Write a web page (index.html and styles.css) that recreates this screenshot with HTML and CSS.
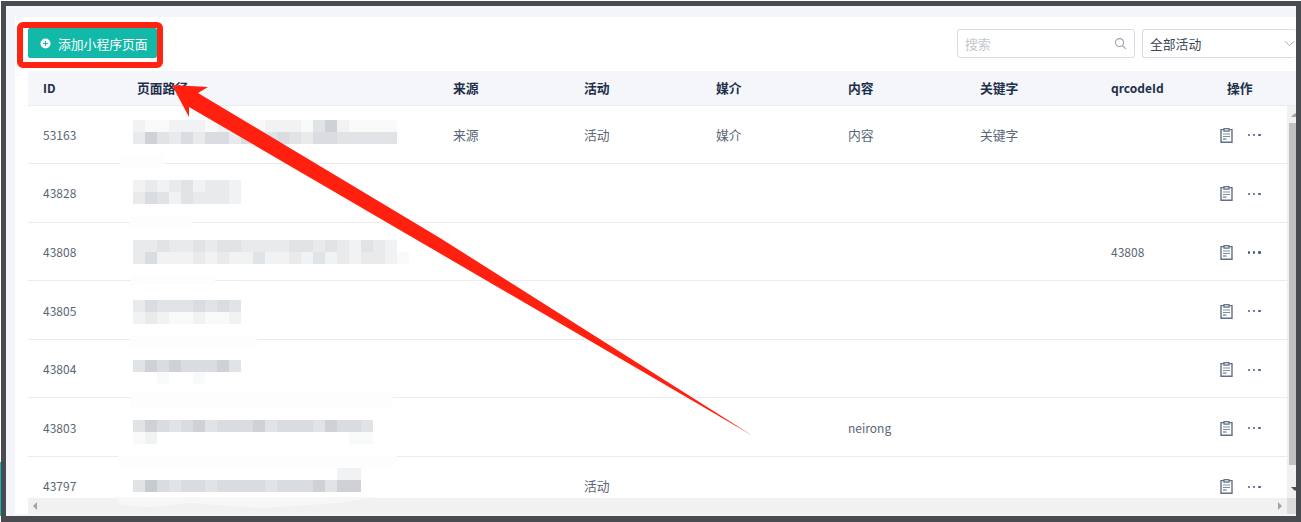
FILE: index.html
```html
<!DOCTYPE html>
<html lang="zh-CN">
<head>
    <meta charset="UTF-8">
    <title>小程序页面</title>
    <link rel="stylesheet" href="styles.css">
</head>
<body>
    <div class="edge"></div>
    <div class="frame">
        <div class="panel">
            <div class="toolbar">
                <button type="button" class="add-button">
                    <svg class="add-icon" viewBox="0 0 12 12"><circle cx="6" cy="6" r="5.5" fill="#fff"/><path d="M3.2 6h5.6M6 3.2v5.6" stroke="#14b8a6" stroke-width="1.3"/></svg>
                    添加小程序页面
                </button>
                <div class="filters">
                    <div class="search">
                        <span>搜索</span>
                        <svg class="search-icon" viewBox="0 0 14 14"><circle cx="6" cy="6" r="4.3" fill="none" stroke="#9aa3ad" stroke-width="1.2"/><path d="M9.2 9.2l3.6 3.6" stroke="#9aa3ad" stroke-width="1.2"/></svg>
                    </div>
                    <div class="select">
                        <span>全部活动</span>
                        <svg class="chevron" viewBox="0 0 12 8"><path d="M1 1.5l5 5 5-5" fill="none" stroke="#9aa3ad" stroke-width="1"/></svg>
                    </div>
                </div>
            </div>

            <div class="table">
                <div class="row head">
                    <div class="latin">ID</div><div>页面路径</div><div>来源</div><div>活动</div><div>媒介</div><div>内容</div><div>关键字</div><div class="latin">qrcodeId</div><div>操作</div>
                </div>
                <div class="body">
                    <div class="rows">
                        <div class="row">
                            <div class="latin">53163</div><div></div>
                            <div>来源</div><div>活动</div><div>媒介</div><div>内容</div><div>关键字</div><div></div>
                            <div class="actions"><svg class="clip"><use href="#clip"/></svg><span class="more"><i></i><i></i><i></i></span></div>
                        </div>
                        <div class="row">
                            <div class="latin">43828</div><div></div>
                            <div></div><div></div><div></div><div></div><div></div><div></div>
                            <div class="actions"><svg class="clip"><use href="#clip"/></svg><span class="more"><i></i><i></i><i></i></span></div>
                        </div>
                        <div class="row">
                            <div class="latin">43808</div><div></div>
                            <div></div><div></div><div></div><div></div><div></div><div class="latin">43808</div>
                            <div class="actions"><svg class="clip"><use href="#clip"/></svg><span class="more"><i></i><i></i><i></i></span></div>
                        </div>
                        <div class="row">
                            <div class="latin">43805</div><div></div>
                            <div></div><div></div><div></div><div></div><div></div><div></div>
                            <div class="actions"><svg class="clip"><use href="#clip"/></svg><span class="more"><i></i><i></i><i></i></span></div>
                        </div>
                        <div class="row">
                            <div class="latin">43804</div><div></div>
                            <div></div><div></div><div></div><div></div><div></div><div></div>
                            <div class="actions"><svg class="clip"><use href="#clip"/></svg><span class="more"><i></i><i></i><i></i></span></div>
                        </div>
                        <div class="row">
                            <div class="latin">43803</div><div></div>
                            <div></div><div></div><div></div><div class="latin">neirong</div><div></div><div></div>
                            <div class="actions"><svg class="clip"><use href="#clip"/></svg><span class="more"><i></i><i></i><i></i></span></div>
                        </div>
                        <div class="row">
                            <div class="latin">43797</div><div></div>
                            <div></div><div>活动</div><div></div><div></div><div></div><div></div>
                            <div class="actions"><svg class="clip"><use href="#clip"/></svg><span class="more"><i></i><i></i><i></i></span></div>
                        </div>
                    </div>
                    <div class="vbar"><b class="up"></b><span class="vthumb"></span><b class="down"></b></div>
                </div>
                <div class="hbar"><div class="htrack"><b class="left"></b><b class="right"></b></div><div class="corner"></div></div>
            </div>
        </div>

        <!-- pixelated paths sit on one 12px grid over the table -->
        <div class="mosaic" id="mosaic"></div>

        <!-- white smears left by the screenshot editor, and the red markup -->
        <svg class="markup" viewBox="0 0 1301 522">
            <g fill="#fdfdfd">
                <rect x="120" y="155" width="43" height="13"/>
                <rect x="130" y="217" width="62" height="11"/>
                <rect x="130" y="274" width="85" height="11"/>
                <rect x="130" y="336" width="127" height="12"/>
                <rect x="130" y="391" width="263" height="17"/>
                <path d="M118 455H397V463L385 468H118Z"/>
            </g>
            <path d="M115 497H377L340 503 260 508 190 503 150 507 120 505Z" fill="#f7f7f7"/>
            <rect x="20" y="25" width="140" height="40" rx="3" fill="none" stroke="#ff2412" stroke-width="6"/>
            <path d="M172 85L208 87 198 93 440 238 753 436 189 107 189 117Z" fill="#ff2010"/>
        </svg>
    </div>

    <svg width="0" height="0" class="defs">
        <symbol id="clip" viewBox="0 0 13 15">
            <path d="M4 1.6H1v12.7h11V1.6H9" fill="#fff" stroke="#5f7186" stroke-width="1.4"/>
            <rect x="4" y=".7" width="5" height="2.4" fill="#fff" stroke="#5f7186" stroke-width="1.3"/>
            <path d="M3 6h7M3 8.5h7" stroke="#7f8c9b" stroke-width="1"/><path d="M3 11h3.5" stroke="#4a5a6e" stroke-width="1"/>
        </symbol>
    </svg>
    <script src="mosaic.js"></script>
</body>
</html>
```

FILE: styles.css
```css
html, body {
    margin: 0;
    height: 100%;
    overflow: hidden;
    background-color: white;
}

body {
    padding: 1px 0 0 1px;
    box-sizing: border-box;
    font-family: "Noto Sans CJK SC", "Noto Sans", sans-serif;
    font-size: 12.8px;
    color: #5a6675;
}

.defs {
    position: absolute;
}

.edge {
    position: absolute;
    left: 0;
    top: 462px;
    width: 1px;
    height: 54px;
    background-color: #14b8a6;
}

.frame {
    position: relative;
    width: 1300px;
    height: 521px;
    box-sizing: border-box;
    border: solid #484c50;
    border-width: 5px 5px 6px 5px;
    background-color: #f3f5f9;
    padding: 11px 0 2px 9px;
}

.panel {
    display: flex;
    flex-direction: column;
    height: 100%;
    background-color: white;
    padding-left: 13px;
}

.toolbar {
    display: flex;
    justify-content: space-between;
    align-items: flex-start;
    height: 54px;
    padding-top: 11px;
    box-sizing: border-box;
    flex: none;
}

.add-button {
    display: flex;
    align-items: center;
    gap: 7px;
    width: 129px;
    height: 30px;
    padding: 0 0 0 12px;
    border: none;
    border-radius: 2px;
    background-color: #12b8a8;
    color: white;
    font: inherit;
}

.add-icon {
    width: 11px;
    height: 11px;
    flex: none;
}

.filters {
    display: flex;
    gap: 7px;
    margin-top: 1px;
}

.search, .select {
    display: flex;
    align-items: center;
    justify-content: space-between;
    height: 29px;
    box-sizing: border-box;
    border: 1px solid #d8dce3;
    border-radius: 3px;
    padding: 0 7px;
}

.search {
    width: 178px;
    color: #c3c7ce;
}

.select {
    width: 154px;
    color: #3c4654;
    border-right: none;
    padding-right: 0;
}

.search-icon {
    width: 13px;
    height: 13px;
}

.chevron {
    width: 11px;
    height: 7px;
    margin-right: 1px;
}

.table {
    flex: 1;
    display: flex;
    flex-direction: column;
    min-height: 0;
}

.row {
    display: grid;
    grid-template-columns: 94px 316px 131px 132px 132px 132px 131px 116px 1fr;
    align-items: center;
    height: 58.6px;
    box-sizing: border-box;
    border-bottom: 1px solid #e9ebef;
    flex: none;
}

.row > div {
    padding-left: 15px;
}

.row > .latin {
    font-size: 12px;
}

.row.head {
    height: 34.5px;
    background-color: #f4f6fa;
    color: #1e2f4a;
    font-weight: 700;
}

.body {
    flex: 1;
    display: flex;
    min-height: 0;
}

.rows {
    flex: 1;
    overflow: hidden;
}

.mosaic {
    position: absolute;
    left: 127px;
    top: 114px;
}

.mosaic-line {
    display: flex;
    height: 12px;
}

.mosaic-line i {
    width: 12px;
    flex: none;
}

.m0 { background-color: #f8f9f9; }
.m1 { background-color: #f1f2f3; }
.m2 { background-color: #e9eaec; }
.m3 { background-color: #e1e4e7; }
.m4 { background-color: #d9dce0; }
.m5 { background-color: #cfd1d7; }
.m6 { background-color: #c6cad1; }

.row > .actions {
    display: flex;
    align-items: center;
    gap: 15px;
    padding: 2px 0 0 8px;
}

.clip {
    width: 13px;
    height: 15px;
}

.more {
    display: flex;
    gap: 3px;
}

.more i {
    width: 2.2px;
    height: 2.2px;
    border-radius: 50%;
    background-color: #4a5f7a;
}

/* the scrollbar runs under the window edge, so only its left part shows */
.vbar {
    position: relative;
    width: 9px;
    background-color: #f1f1f1;
    flex: none;
    overflow: hidden;
}

.vthumb {
    position: absolute;
    top: 17.5px;
    bottom: 33px;
    left: 2px;
    right: 0;
    background-color: #c1c1c1;
}

.up, .down, .left, .right {
    position: absolute;
    width: 0;
    height: 0;
    border: 4px solid transparent;
}

.up {
    top: 7px;
    left: 4px;
    border-top: none;
    border-bottom-color: #a3a3a3;
}

.down {
    bottom: 7px;
    left: 4px;
    border-bottom: none;
    border-top-color: #505050;
}

.hbar {
    display: flex;
    height: 16px;
    flex: none;
}

.htrack {
    position: relative;
    flex: 1;
    background-color: #f1f1f1;
}

.corner {
    width: 9px;
    background-color: #dcdcdc;
}

.left {
    left: 5px;
    top: 4px;
    border-left: none;
    border-right-color: #a3a3a3;
}

.right {
    right: 5px;
    top: 4px;
    border-right: none;
    border-left-color: #a3a3a3;
}

.markup {
    position: absolute;
    top: -6px;
    left: -6px;
    width: 1301px;
    height: 522px;
    pointer-events: none;
}
```

FILE: mosaic.js
```js
// one string per 12px line, digit = tone class, space = untouched
var lines = {
    0:  '1001110101011103510000',
    1:  '2532424424334324433333',
    5:  '121231221',
    6:  '243132221',
    10: '2232232332222332321321',
    11: '24111212113112131212210',
    15: '243334343',
    16: '121001001',
    20: '354544453',
    21: '  0  0',
    25: '35434534445344435443',
    26: '01                00',
    29: '                 11',
    30: '3643443444434445355'
};

var box = document.getElementById('mosaic');
for (var i = 0; i <= 30; i++) {
    var row = document.createElement('div');
    row.className = 'mosaic-line';
    (lines[i] || '').split('').forEach(function (c) {
        var cell = document.createElement('i');
        if (c !== ' ') cell.className = 'm' + c;
        row.appendChild(cell);
    });
    box.appendChild(row);
}
```
